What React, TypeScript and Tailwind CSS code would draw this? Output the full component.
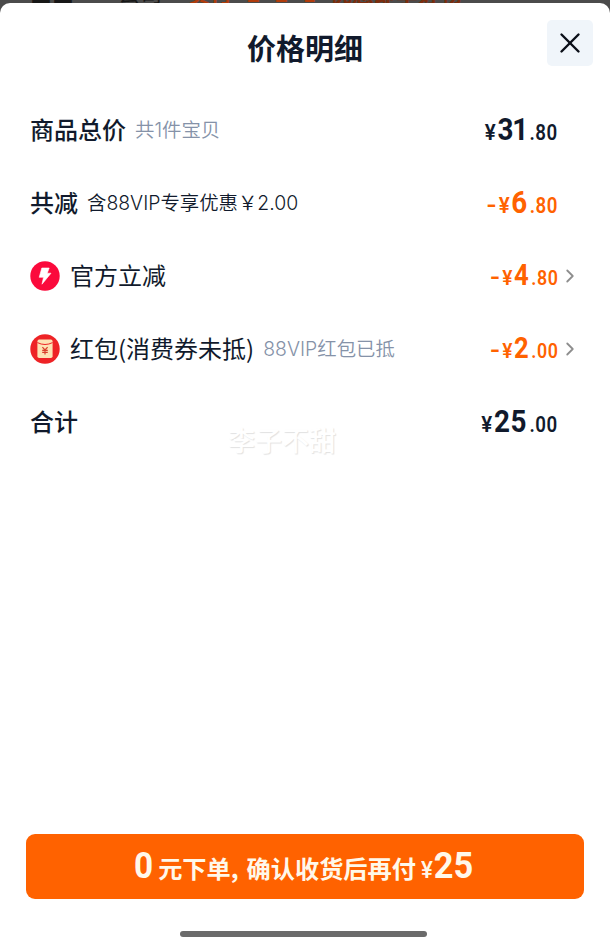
import React from "react";
import { ChevronRight, X } from "lucide-react";

interface AmountProps {
  whole: string;
  cents: string;
  wholeClass?: string;
  discount?: boolean;
  small?: boolean;
}

interface RowProps extends AmountProps {
  label: string;
  note?: string;
  noteClass?: string;
  icon?: React.ReactNode;
  link?: boolean;
}

const Amount: React.FC<AmountProps> = ({
  whole,
  cents,
  wholeClass = "tracking-normal",
  discount,
  small,
}) => (
  <div
    className={`flex origin-right scale-x-[0.87] items-baseline pt-[3px] font-['Roboto'] font-bold ${
      discount ? "text-[#ff6200]" : "text-[#111a2c]"
    }`}
  >
    {discount ? (
      <span className="mr-[3px] inline-block origin-right scale-x-[1.4] text-[22px] leading-none">
        -
      </span>
    ) : null}
    <span
      className={`inline-block origin-right scale-x-[1.1] font-semibold ${
        small ? "mr-[2px] text-[20px]" : "mr-[2px] text-[21.5px]"
      }`}
    >
      ¥
    </span>
    <span
      className={`leading-none ${small ? "text-[29.5px]" : "text-[32px]"} ${wholeClass}`}
    >
      {whole}
    </span>
    <span
      className={`ml-[3px] font-semibold tracking-[0.6px] ${
        small ? "text-[20.5px]" : "text-[21.5px]"
      }`}
    >
      .{cents}
    </span>
  </div>
);

const BoltIcon = () => (
  <svg viewBox="0 0 30 30" className="mr-[10px] size-[30px]">
    <circle cx="15" cy="15" r="14.7" fill="#fb0a3c" />
    <path
      d="M11.8 7h7.4l-2 5.2h3.8L12 23.2l1.5-6.9H9.2z"
      fill="#fff"
      stroke="#fff"
      strokeWidth="0.6"
      strokeLinejoin="round"
    />
  </svg>
);

const EnvelopeIcon = () => (
  <svg viewBox="0 0 30 30" className="mr-[10px] size-[30px]">
    <circle cx="15" cy="15" r="14.7" fill="#ee2326" />
    <rect x="7.4" y="5.6" width="15.2" height="18.4" rx="1.8" fill="#fde3b5" />
    <path d="M7.4 8.6Q15 12.4 22.6 8.6" fill="none" stroke="#ee2326" strokeWidth="1" />
    <path
      d="M12.4 13.2 15 16l2.6-2.8M15 16v4.6M12.2 16.3h5.6M12.2 18.4h5.6"
      fill="none"
      stroke="#d9402c"
      strokeWidth="1.2"
    />
  </svg>
);

const Row: React.FC<RowProps> = ({
  label,
  note,
  noteClass = "text-[#8592a8]",
  icon,
  link,
  ...amount
}) => (
  <div className="flex h-[73px] items-center">
    {icon}
    <span className={`pb-[2px] text-[24px] ${icon ? "font-normal" : "font-medium"}`}>{label}</span>
    {note ? (
      <span
        className={`ml-[9px] pt-[2px] font-['Inter','Noto_Sans_CJK_SC',sans-serif] text-[19.4px] font-[350] whitespace-pre ${noteClass}`}
      >
        {note}
      </span>
    ) : null}
    <div className="ml-auto flex w-[110px] justify-end">
      <Amount {...amount} />
    </div>
    <div className="flex w-[20px] justify-end">
      {link ? (
        <ChevronRight className="-mr-[3px] size-[22px] shrink-0 text-[#8e8e8e]" strokeWidth={2} />
      ) : null}
    </div>
  </div>
);

export default function App() {
  return (
    <div className="relative h-[949px] w-[610px] overflow-hidden bg-[#4b4b4b] pt-[3px] font-['Noto_Sans_CJK_SC',sans-serif] text-[#111a2c]">
      {/* bottom edge of the order page behind the sheet */}
      <div className="absolute top-0 left-0 flex h-[3px] w-full items-end overflow-hidden text-[22px] leading-[22px] font-bold whitespace-nowrap">
        <span className="ml-[30px] text-[#171717]">■■</span>
        <span className="ml-[44px] font-normal text-[#171717]">公司</span>
        <span className="ml-[26px] text-[#b03c0b] [word-spacing:10px]">实付 2 2 1</span>
        <span className="ml-[14px] text-[#7c2d0d]">优惠即享好物</span>
      </div>
      <div className="relative flex h-[946px] flex-col rounded-t-[10px] bg-white">
        <header className="relative flex h-[90px] items-center justify-center">
          <h1 className="text-[29px] font-bold">价格明细</h1>
          <button
            aria-label="关闭"
            className="absolute top-[17px] right-[17px] flex size-[46px] items-center justify-center rounded-[5px] bg-[#f0f5fa]"
          >
            <X className="size-[34px] text-[#0b0f18]" strokeWidth={1.7} />
          </button>
        </header>
        <main className="pr-[32px] pl-[30px]">
          <Row
            label="商品总价"
            note="共1件宝贝"
            whole="31"
            cents="80"
            wholeClass="tracking-[-1.5px]"
          />
          <Row
            label="共减"
            note="含88VIP专享优惠￥2.00"
            noteClass="text-[#111a2c]"
            whole="6"
            cents="80"
            discount
          />
          <Row label="官方立减" icon={<BoltIcon />} whole="4" cents="80" discount small link />
          <Row
            label="红包(消费券未抵)"
            note="88VIP红包已抵"
            icon={<EnvelopeIcon />}
            whole="2"
            cents="00"
            discount
            small
            link
          />
          <Row label="合计" whole="25" cents="00" wholeClass="tracking-[0.5px]" />
        </main>
        <span className="absolute top-[417px] left-[228px] text-[27px] leading-[40px] font-medium text-white [text-shadow:1px_1px_1px_#e2e2e2]">
          李子不甜
        </span>
        <footer className="mt-auto flex flex-col items-center px-[26px] pb-[12px]">
          <button className="flex h-[65px] w-full items-center justify-center rounded-[9px] bg-[#ff6200] text-[#fff8ea]">
            <span className="flex items-baseline pt-[2px]">
              <span className="scale-x-[0.9] font-['Roboto'] text-[37px] leading-none font-bold">
                0
              </span>
              <span className="ml-[4px] text-[24.2px] font-bold">元下单,</span>
              <span className="ml-[8px] text-[24.2px] font-bold">确认收货后再付</span>
              <span className="ml-[5px] flex origin-left scale-x-[0.93] items-baseline font-['Roboto'] font-bold">
                <span className="mr-[1px] text-[24px] font-medium">¥</span>
                <span className="text-[37px] leading-none">25</span>
              </span>
            </span>
          </button>
          <div className="mt-[32px] mr-[4px] h-[6px] w-[247px] rounded-full bg-[#6b6b6b]" />
        </footer>
      </div>
    </div>
  );
}
